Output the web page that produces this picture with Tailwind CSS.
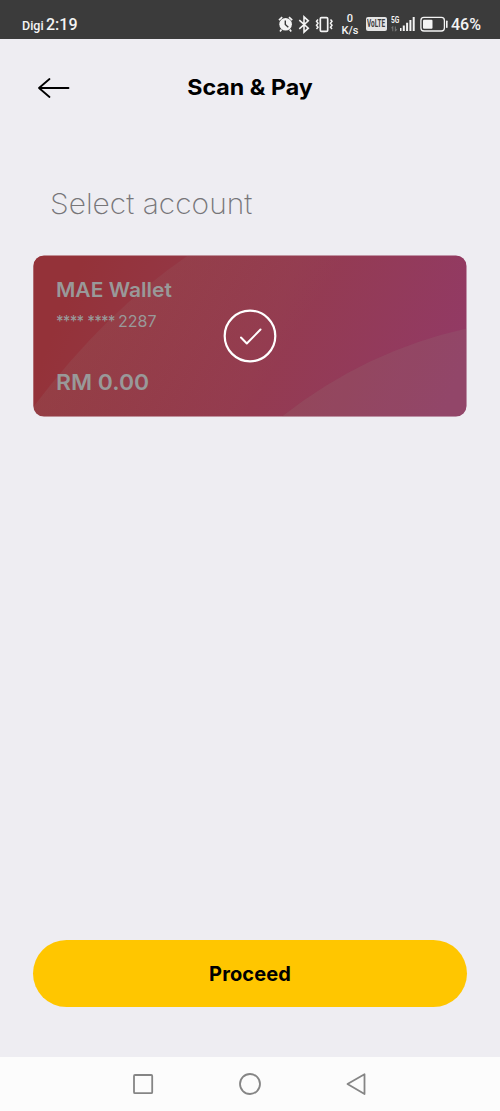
<!DOCTYPE html>
<html lang="en">
<head>
<meta charset="utf-8">
<title>Scan &amp; Pay</title>
<script src="https://cdn.jsdelivr.net/npm/@tailwindcss/browser@4"></script>
</head>
<body class="flex h-[1111px] w-[500px] flex-col overflow-hidden bg-[#eeedf2] font-['Inter',sans-serif] text-black">
  <div class="flex h-[39px] shrink-0 items-start bg-[#3b3b3b] pr-[1px] pl-[22px] font-['Roboto',sans-serif] font-medium text-[#f4f4f4]">
    <span class="mt-[16px] w-[24px] text-[12.5px] leading-[19px] whitespace-nowrap">Digi</span>
    <span class="mt-[15px] w-[40px] text-[16px] leading-[20px] whitespace-nowrap">2:19</span>
    <svg class="ml-auto h-[39px] w-[68px] shrink-0" viewBox="274 0 68 39" fill="none" stroke="#f4f4f4">
      <circle cx="285.600" cy="24.300" r="6.300" fill="#f4f4f4" stroke="none"/>
      <path d="M279 20.200l3.200-3M292.200 20.200l-3.200-3M281.500 29.500l-1.500 2M289.700 29.500l1.500 2" stroke-width="1.700"/>
      <path d="M285.300 20.500v4l3 2.800" stroke="#3b3b3b" stroke-width="1.400"/>
      <path d="M299.300 20.200l9 8-4.300 4v-15.400l4.300 4-9 8" stroke-width="1.600"/>
      <rect x="320.300" y="17.600" width="7.400" height="13.800" rx="1.200" stroke-width="1.700"/>
      <path d="M318 19.500l-1.500 1.800 1.500 2-1.500 2 1.500 2-1.500 1.700M330.500 19.500l1.500 1.800-1.500 2 1.500 2-1.500 2 1.500 1.700" stroke-width="1.500"/>
    </svg>
    <div class="mt-[13px] w-[16px] text-center text-[11px] leading-[12px]"><div>0</div><div class="-ml-[2px] w-[20px]">K/s</div></div>
    <div class="mt-[17px] ml-[8px] flex h-[14px] w-[21px] justify-center rounded-[2px] bg-[#e4e4e4] font-bold text-[#3b3b3b]">
      <span class="scale-x-[.64] text-[10px] leading-[14px]">VoLTE</span>
    </div>
    <div class="mt-[15px] ml-[4px] w-[9px]">
      <div class="w-[13px] origin-left scale-x-[.74] text-[9px] leading-[11px] font-bold">5G</div>
      <svg class="h-[6px] w-[7px]" viewBox="0 0 8 7" fill="none" stroke="#777"><path d="M2 6V1L.5 2.500M5 0.500v5L7 4" stroke-width="1.200"/></svg>
    </div>
    <svg class="h-[39px] w-[50px] shrink-0" viewBox="400 0 50 39" fill="#f4f4f4">
      <path d="M399.500 28h2v3h-2zM402.800 25.500h2v5.500h-2zM406.100 22.800h2v8.200h-2zM409.400 20h2v11h-2zM412.700 17h2v14h-2z"/>
      <rect x="420.900" y="17.400" width="23.500" height="13.600" rx="3" fill="none" stroke="#f4f4f4" stroke-width="1.300"/>
      <rect x="423" y="19.800" width="9.500" height="9" rx="1"/>
      <rect x="446" y="20.500" width="1.600" height="7.500" rx=".7"/>
    </svg>
    <span class="mt-[15px] w-[49px] pl-[1px] text-[16px] leading-[20px]">46%</span>
  </div>

  <header class="grid h-[97px] shrink-0 grid-cols-[100px_1fr_100px] items-center">
    <svg class="ml-[37px] h-[24px] w-[34px]" viewBox="37 76 34 24" fill="none" stroke="#000" stroke-width="1.800" stroke-linecap="round" stroke-linejoin="round"><path d="M68.500 88H39M49.500 79l-10.500 9 10.500 9"/></svg>
    <h1 class="scale-x-[1.055] pb-[2px] text-center text-[22px] leading-[28px] font-bold">Scan &amp; Pay</h1>
  </header>

  <main class="flex flex-1 flex-col px-[33px]">
    <h2 class="mt-[50px] ml-[17px] origin-left scale-x-[1.07] text-[28px] leading-[36px] font-extralight whitespace-nowrap text-[#777679]">Select account</h2>
    <section class="relative mt-[33px] h-[162px] w-[434px] overflow-hidden rounded-[11px] text-[#999]">
      <svg class="absolute inset-0 h-full w-full" viewBox="33 255 434 162">
        <defs>
          <linearGradient id="base" gradientUnits="userSpaceOnUse" x1="90" y1="240" x2="460" y2="390"><stop offset="0" stop-color="#943239"/><stop offset=".5" stop-color="#943b4f"/><stop offset="1" stop-color="#923a66"/></linearGradient>
          <linearGradient id="sheen" gradientUnits="userSpaceOnUse" x1="90" y1="310" x2="250" y2="410"><stop offset="0" stop-color="#968282" stop-opacity=".15"/><stop offset="1" stop-color="#968282" stop-opacity="0"/></linearGradient>
        </defs>
        <rect x="33.300" y="255.500" width="433.200" height="161" rx="10.500" fill="url(#base)"/>
        <path d="M188 255.500Q105 312 33.300 407V416.500H466V255.500z" fill="url(#sheen)"/>
        <path d="M282 416.500Q365 351 466.500 328.500V406a10.500 10.500 0 0 1-10.500 10.500z" fill="#93847d" fill-opacity=".17"/>
      </svg>
      <div class="relative flex h-full flex-col pl-[23px] whitespace-nowrap">
        <div class="mt-[22px] origin-left scale-x-[1.05] text-[20px] leading-[26px] font-semibold">MAE Wallet</div>
        <div class="mt-[7px] text-[16px] leading-[22px]"><span class="inline-block w-[62px] origin-left scale-x-[.92] font-medium tracking-[-.9px] [word-spacing:1px]">**** ****</span>2287</div>
        <div class="mt-[36px] origin-left scale-x-[1.04] text-[22px] leading-[28px] font-semibold">RM 0.00</div>
      </div>
      <svg class="absolute top-[54px] left-[190px] h-[54px] w-[54px]" viewBox="0 0 54 54" fill="none" stroke="#fff" stroke-linecap="round" stroke-linejoin="round"><circle cx="27" cy="27" r="25.300" stroke-width="2.200"/><path d="M18 28.500l5.800 6L37.500 20.500" stroke-width="2"/></svg>
    </section>
    <button class="mt-auto mb-[50px] h-[67px] w-[434px] rounded-full bg-[#ffc600] text-[20px] leading-[26px] font-bold tracking-[.1px]">Proceed</button>
  </main>

  <nav class="h-[54px] shrink-0 bg-[#fcfcfc]">
    <svg class="h-[54px] w-[500px]" viewBox="0 1057 500 54" fill="none" stroke="#858585" stroke-width="1.800" stroke-linejoin="round">
      <rect x="134" y="1075" width="18.200" height="18.200" rx="1"/>
      <circle cx="250" cy="1084" r="10"/>
      <path d="M347.500 1084L364.500 1074.200V1094z"/>
    </svg>
  </nav>
</body>
</html>
